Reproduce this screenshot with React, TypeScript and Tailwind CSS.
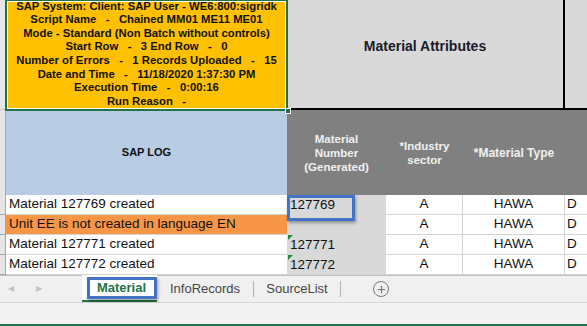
import { Plus } from 'lucide-react'

const headerLines = [
  'SAP System: Client: SAP User - WE6:800:sigridk',
  'Script Name   -   Chained MM01 ME11 ME01',
  'Mode - Standard (Non Batch without controls)',
  'Start Row   -   3 End Row   -   0',
  'Number of Errors   -   1 Records Uploaded   -   15',
  'Date and Time   -   11/18/2020 1:37:30 PM',
  'Execution Time   -   0:00:16',
  'Run Reason   -',
]

const rows = [
  { log: 'Material 127769 created', number: '127769', error: false, flag: false, boxed: true },
  { log: 'Unit EE is not created in language EN', number: '', error: true, flag: false, boxed: false },
  { log: 'Material 127771 created', number: '127771', error: false, flag: true, boxed: false },
  { log: 'Material 127772 created', number: '127772', error: false, flag: true, boxed: false },
]

function GreenFlag() {
  return (
    <span className="absolute left-px top-0 w-0 h-0 border-t-[5px] border-r-[5px] border-t-[#1e8a3c] border-r-transparent" />
  )
}

export default function App() {
  return (
    <div
      className="w-[587px] h-[326px] overflow-hidden bg-white text-[#111]"
      style={{ fontFamily: '"Liberation Sans", Arial, sans-serif' }}
    >
      {/* Sheet grid */}
      <div className="grid grid-cols-[6px_281px_99px_77px_102px_1fr] grid-rows-[110px_85px_20px_20px_20px_20px] h-[275px]">
        {/* Row 1 */}
        <div className="bg-[#e6e6e6] border-b border-[#c6c6c6]" />
        <div className="relative bg-[#ffc000] flex flex-col justify-center items-center pb-[2px]">
          {headerLines.map((line) => (
            <div key={line} className="whitespace-pre text-[11.3px] leading-[13.6px] font-bold">
              {line}
            </div>
          ))}
          <div className="absolute -left-px -top-px -right-px -bottom-px border-2 border-[#217346] shadow-[inset_0_0_0_1px_#ffffff]" />
          <div className="absolute -right-[4px] -bottom-[4px] w-[6px] h-[6px] bg-[#217346] border border-white" />
        </div>
        <div className="col-span-3 bg-[#d9d9d9] border-b-2 border-r-2 border-black flex items-center justify-center pb-[16px]">
          <span className="text-[14px] font-bold text-[#1a1a2a]">Material Attributes</span>
        </div>
        <div className="bg-[#d9d9d9] border-b-2 border-black" />

        {/* Row 2 */}
        <div className="bg-[#e6e6e6] border-r border-[#a6a6a6]" />
        <div className="bg-[#b8cce4] flex items-center justify-center">
          <span className="text-[11px] font-bold">SAP LOG</span>
        </div>
        <div className="bg-[#808080] flex items-center justify-center text-center">
          <span className="text-[11.5px] leading-[14px] font-bold text-[#f0f0f0]">
            Material
            <br />
            Number
            <br />
            (Generated)
          </span>
        </div>
        <div className="bg-[#808080] flex items-center justify-center text-center">
          <span className="text-[11.5px] leading-[14px] font-bold text-[#f0f0f0]">
            *Industry
            <br />
            sector
          </span>
        </div>
        <div className="bg-[#808080] flex items-center justify-center">
          <span className="text-[12px] font-bold text-[#f0f0f0]">*Material Type</span>
        </div>
        <div className="bg-[#808080]" />

        {/* Data rows */}
        {rows.map((r) => (
          <div key={r.log} className="contents">
            <div className="bg-[#e6e6e6] border-r border-b border-[#a6a6a6]" />
            <div
              className={
                r.error
                  ? 'bg-[#f79646] border-b border-[#d4d4d4] pl-[3px] flex items-center text-[13.5px] whitespace-nowrap'
                  : 'bg-white border-b border-[#d4d4d4] pl-[3px] flex items-center text-[13.5px] whitespace-nowrap'
              }
            >
              {r.log}
            </div>
            <div className="relative bg-[#d9d9d9] pl-[3px] flex items-center text-[13.5px]">
              {r.flag && <GreenFlag />}
              {r.number}
              {r.boxed && (
                <div className="absolute left-0 top-0 w-[68px] h-[26px] border-[3px] border-[#4472c4] shadow-[1px_2px_3px_rgba(0,0,0,0.35)] z-10" />
              )}
            </div>
            <div className="bg-white border-r border-b border-[#d4d4d4] flex items-center justify-center text-[13.5px]">
              A
            </div>
            <div className="bg-white border-r border-b border-[#d4d4d4] flex items-center justify-center text-[13.5px]">
              HAWA
            </div>
            <div className="bg-white border-b border-[#d4d4d4] flex items-center pl-[2px] text-[13.5px]">
              D
            </div>
          </div>
        ))}
      </div>

      {/* Sheet tabs */}
      <div className="h-[27px] bg-[#f0f0f0] border-t border-[#c0c0c0] flex items-stretch text-[13px]">
        <div className="w-[82px] flex items-center text-[#c4c4c4] text-[8px]">
          <span className="ml-[8px]">◀</span>
          <span className="ml-[22px]">▶</span>
        </div>
        <div className="relative w-[75px] bg-white border-b-2 border-[#217346] flex items-center justify-center -mt-px">
          <span className="font-bold text-[#217346] ml-[4px]">Material</span>
          <div className="absolute left-[5px] top-[2px] w-[70px] h-[22px] border-[3px] border-[#4472c4] shadow-[1px_2px_3px_rgba(0,0,0,0.35)]" />
        </div>
        <div className="w-[96px] flex items-center justify-center text-[#444]">InfoRecords</div>
        <div className="my-[5px] w-px bg-[#b0b0b0]" />
        <div className="w-[86px] flex items-center justify-center text-[#444]">SourceList</div>
        <div className="my-[5px] w-px bg-[#b0b0b0]" />
        <div className="w-[80px] flex items-center justify-center">
          <span className="w-[16px] h-[16px] rounded-full border border-[#7a7a7a] flex items-center justify-center">
            <Plus className="w-[11px] h-[11px] text-[#7a7a7a]" strokeWidth={2.5} />
          </span>
        </div>
      </div>

      {/* Status bar */}
      <div className="h-[24px] bg-[#f3f3f3] border-t border-[#d4d4d4] border-b-2 border-b-[#217346]" />
    </div>
  )
}
